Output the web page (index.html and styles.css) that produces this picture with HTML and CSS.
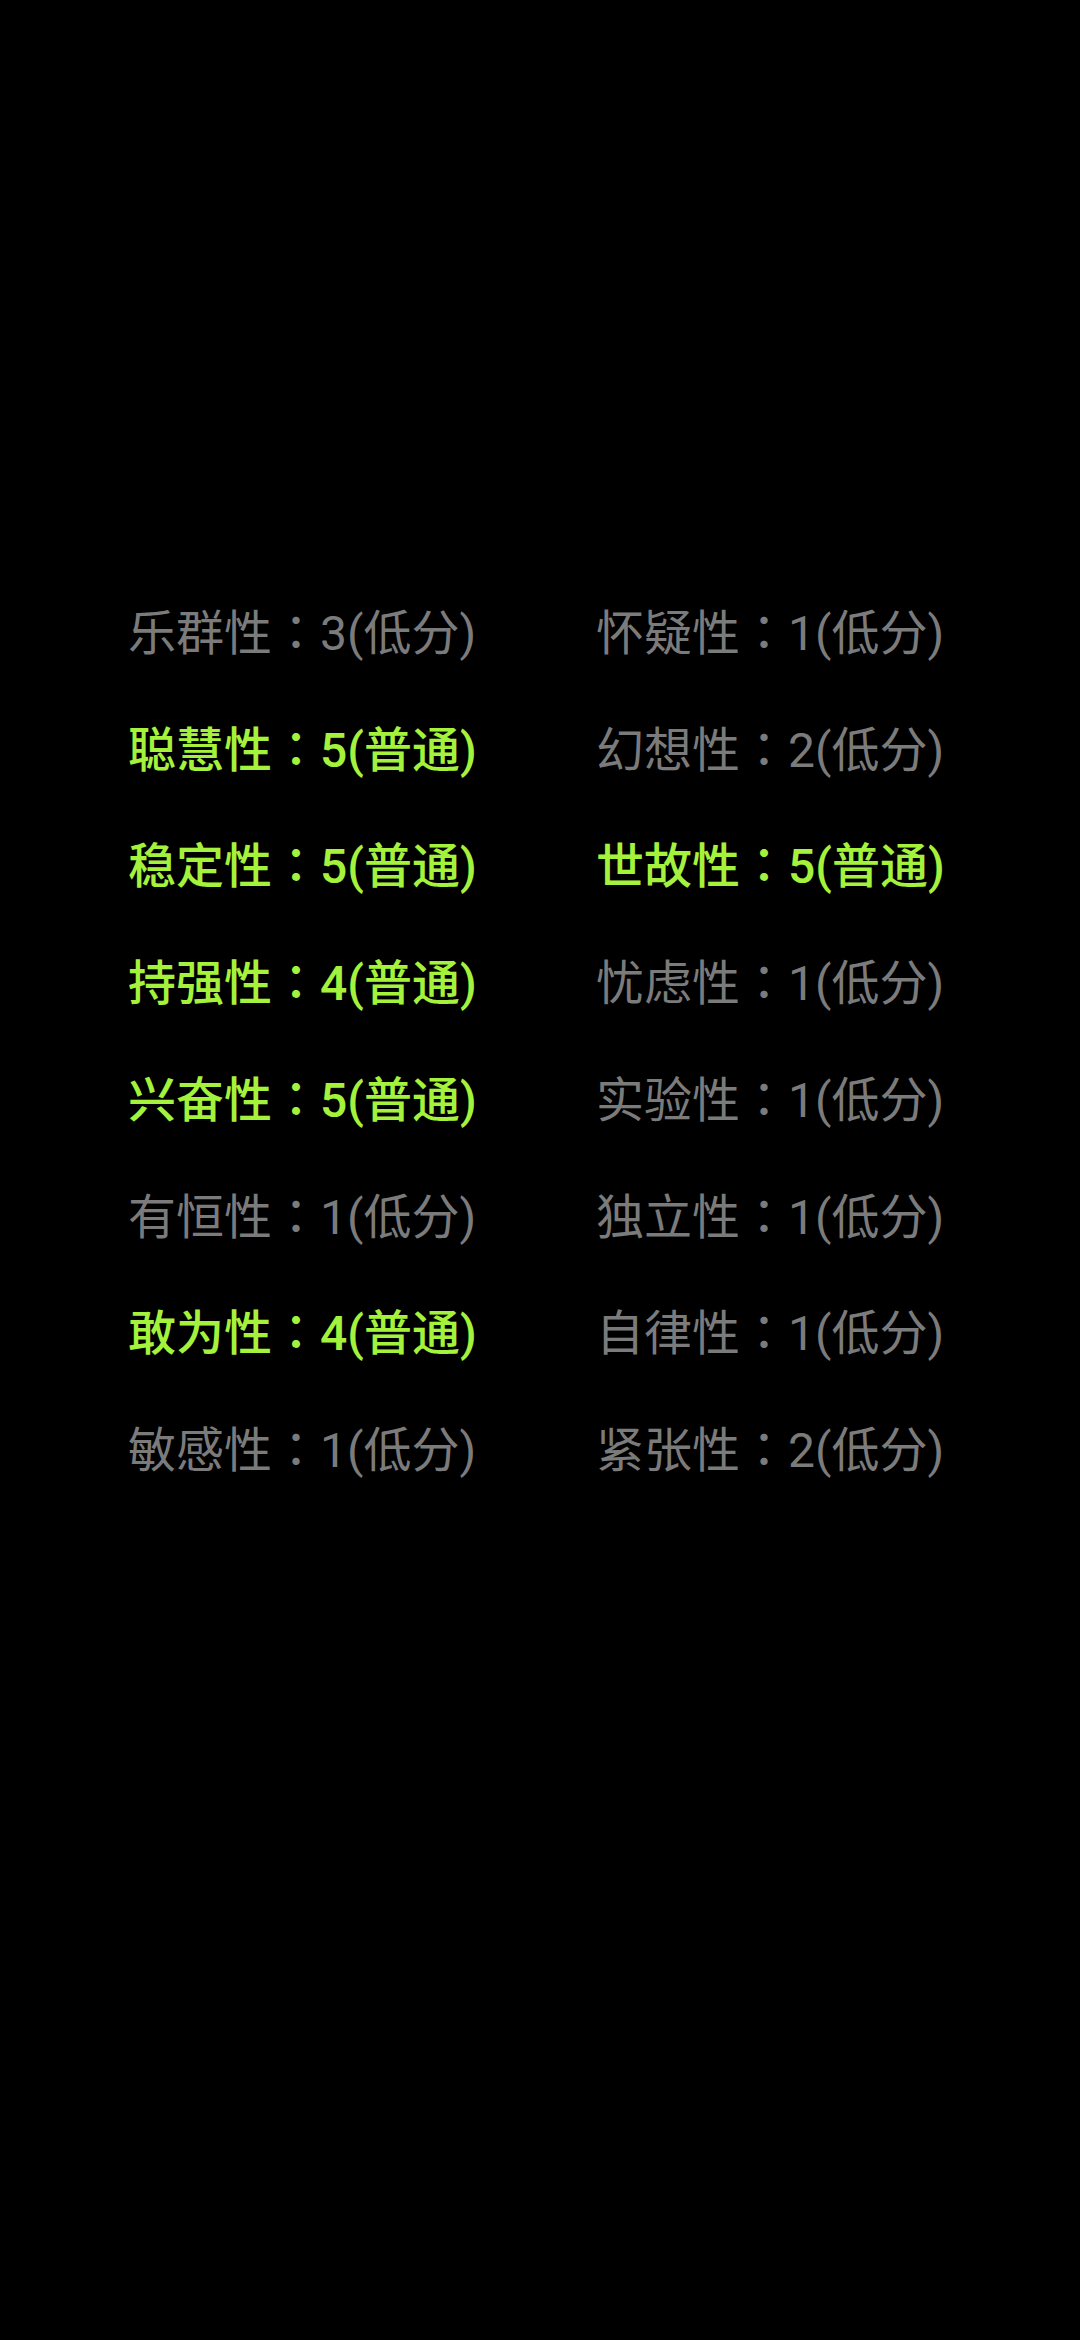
FILE: index.html
```html
<!DOCTYPE html>
<html lang="zh-CN">
<head>
  <meta charset="UTF-8" />
  <meta name="viewport" content="width=device-width, initial-scale=1.0" />
  <title>性格因素</title>
  <link rel="stylesheet" href="styles.css">
</head>
<body>
  <div class="traits">
    <div class="trait">乐群性<span class="colon" lang="zh-TW">：</span>3(低分)</div>
    <div class="trait">怀疑性<span class="colon" lang="zh-TW">：</span>1(低分)</div>
    <div class="trait high">聪慧性<span class="colon" lang="zh-TW">：</span>5(普通)</div>
    <div class="trait">幻想性<span class="colon" lang="zh-TW">：</span>2(低分)</div>
    <div class="trait high">稳定性<span class="colon" lang="zh-TW">：</span>5(普通)</div>
    <div class="trait high">世故性<span class="colon" lang="zh-TW">：</span>5(普通)</div>
    <div class="trait high">持强性<span class="colon" lang="zh-TW">：</span>4(普通)</div>
    <div class="trait">忧虑性<span class="colon" lang="zh-TW">：</span>1(低分)</div>
    <div class="trait high">兴奋性<span class="colon" lang="zh-TW">：</span>5(普通)</div>
    <div class="trait">实验性<span class="colon" lang="zh-TW">：</span>1(低分)</div>
    <div class="trait">有恒性<span class="colon" lang="zh-TW">：</span>1(低分)</div>
    <div class="trait">独立性<span class="colon" lang="zh-TW">：</span>1(低分)</div>
    <div class="trait high">敢为性<span class="colon" lang="zh-TW">：</span>4(普通)</div>
    <div class="trait">自律性<span class="colon" lang="zh-TW">：</span>1(低分)</div>
    <div class="trait">敏感性<span class="colon" lang="zh-TW">：</span>1(低分)</div>
    <div class="trait">紧张性<span class="colon" lang="zh-TW">：</span>2(低分)</div>
  </div>
</body>
</html>
```

FILE: styles.css
```css
body {
  margin: 0;
  background-color: #000;
  min-height: 100vh;
  font-family: Roboto, "Noto Sans CJK SC", sans-serif;
}

.traits {
  display: grid;
  grid-template-columns: 468px auto;
  padding: 576px 0 0 128px;
}

.trait {
  font-size: 48px;
  line-height: 116.7px;
  color: #7b7b7b;
  white-space: nowrap;
}

.trait.high {
  color: #a4f23b;
  font-weight: 500;
}

/* centred full-width colon, as on the device */
.colon {
  font-family: "Noto Sans CJK TC", "Noto Sans CJK JP", sans-serif;
  line-height: 48px;
}
```
